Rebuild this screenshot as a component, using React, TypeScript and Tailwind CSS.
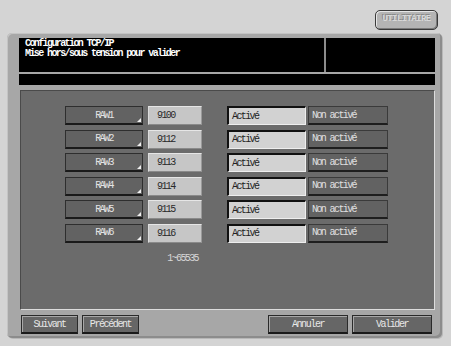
import React from "react";

const mono = { fontFamily: '"Liberation Mono", "DejaVu Sans Mono", monospace' };

const rows = [
  { name: "RAW1", port: "9100" },
  { name: "RAW2", port: "9112" },
  { name: "RAW3", port: "9113" },
  { name: "RAW4", port: "9114" },
  { name: "RAW5", port: "9115" },
  { name: "RAW6", port: "9116" },
];

function Row({ name, port }: { name: string; port: string }) {
  return (
    <div className="flex h-[19px] items-stretch">
      <div className="relative flex w-[78px] items-center justify-center border border-[#2e2e2e] border-b-2 border-b-[#1a1a1a] bg-[#626262] text-[10px] tracking-[-1.6px] text-[#e4e4e4]">
        {name}
        <span className="absolute bottom-[1px] right-[1px] h-0 w-0 [border-bottom:4px_solid_#f0f0f0] [border-left:4px_solid_transparent]" />
      </div>
      <div className="ml-[5px] flex w-[54px] items-center border-t border-l border-t-[#e6e6e6] border-l-[#dcdcdc] border-b border-r border-b-[#8a8a8a] border-r-[#9a9a9a] bg-[#c6c6c6] pl-[8px] text-[10px] tracking-[-1.6px] text-[#2a2a2a]">
        {port}
      </div>
      <div className="ml-[25px] flex w-[79px] items-center border-l-2 border-t-2 border-l-[#111] border-t-[#111] border-b border-r border-b-[#eeeeee] border-r-[#eeeeee] bg-[#d2d2d2] pl-[3px] text-[10px] tracking-[-1.6px] text-[#222]">
        Activé
      </div>
      <div className="ml-[2px] flex w-[80px] items-center border border-[#3a3a3a] border-b-2 border-b-[#1e1e1e] bg-[#626262] pl-[3px] text-[10px] tracking-[-1.6px] text-[#e0e0e0]">
        Non activé
      </div>
    </div>
  );
}

function BottomBtn({ label, w }: { label: string; w: string }) {
  return (
    <div
      className={`flex h-[19px] ${w} items-center justify-center border border-[#2a2a2a] border-b-2 border-b-[#1a1a1a] bg-[#666666] text-[10px] tracking-[-1.4px] text-[#e8e8e8] shadow-[inset_1px_1px_0_#a8a8a8]`}
    >
      {label}
    </div>
  );
}

export default function App() {
  return (
    <div className="flex h-[346px] w-[451px] flex-col bg-[#d4d4d4]" style={mono}>
      <div className="flex h-[33px] justify-end pr-[13px] pt-[10px]">
        <div className="flex h-[20px] w-[63px] items-center justify-center rounded-[5px] border border-[#3a3a3a] bg-[#b4b4b4] shadow-[inset_1px_1px_0_#e6e6e6,inset_-1px_-1px_0_#7a7a7a] text-[9px] font-bold tracking-[-0.6px] text-[#d8d8d8] [text-shadow:-1px_-1px_0_#8a8a8a]">
          UTILITAIRE
        </div>
      </div>
      <div className="ml-[7px] flex h-[305px] w-[435px] flex-col rounded-[5px] bg-[#a7a7a7] pl-[12px] pr-[7px] pt-[5px] shadow-[inset_1px_1px_0_#c4c4c4,inset_-2px_-2px_0_#8c8c8c,1px_1px_0_#b8b8b8]">
        <div className="flex h-[34px] bg-black">
          <div className="w-[305px] pl-[6px] pt-[1px] text-[10px] font-bold leading-[10px] tracking-[-1.6px] text-white">
            <div>Configuration TCP/IP</div>
            <div>Mise hors/sous tension pour valider</div>
          </div>
          <div className="w-[2px] bg-[#8c8c8c]" />
          <div className="flex-1" />
        </div>
        <div className="mt-[2px] h-[11px] bg-black" />
        <div className="ml-[1px] mt-[5px] flex h-[220px] flex-col border-l border-t border-l-[#4a4a4a] border-t-[#4a4a4a] border-r border-b border-r-[#dcdcdc] border-b-[#dcdcdc] bg-[#6b6b6b] pl-[44px] pt-[15px]">
          <div className="flex flex-col gap-[4.6px]">
            {rows.map((r) => (
              <Row key={r.name} name={r.name} port={r.port} />
            ))}
          </div>
          <div className="mt-[8px] w-[133px] text-right text-[10px] tracking-[-1.6px] text-[#d8d8d8]">
            1~65535
          </div>
        </div>
        <div className="mr-[3px] mt-[5px] flex items-center pl-[2px]">
          <BottomBtn label="Suivant" w="w-[57px]" />
          <div className="ml-[4px]">
            <BottomBtn label="Précédent" w="w-[57px]" />
          </div>
          <div className="ml-auto flex gap-[4px]">
            <BottomBtn label="Annuler" w="w-[80px]" />
            <BottomBtn label="Valider" w="w-[80px]" />
          </div>
        </div>
      </div>
    </div>
  );
}
